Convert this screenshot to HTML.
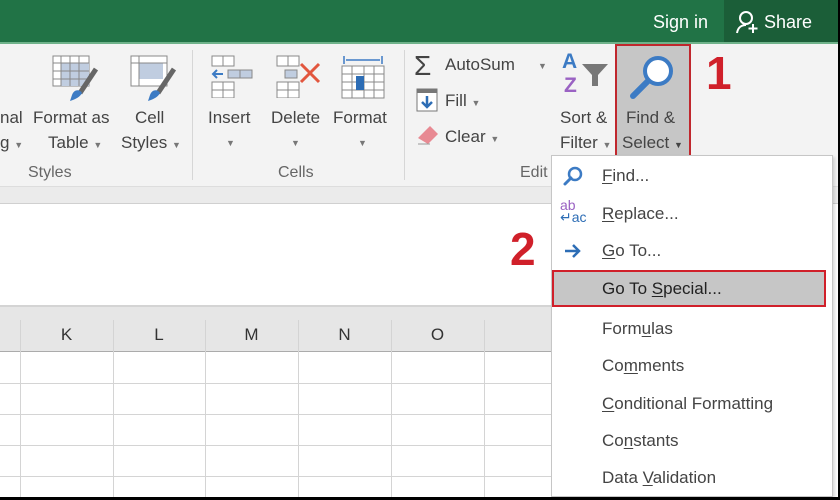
<!DOCTYPE html>
<html><head><meta charset="utf-8"><style>
*{margin:0;padding:0;box-sizing:border-box}
body{width:840px;height:500px;overflow:hidden;background:#000;font-family:"Liberation Sans","DejaVu Sans",sans-serif;position:relative}
.a{position:absolute}
.t{position:absolute;color:#444;font-size:17px;white-space:nowrap}
.c{text-align:center}
.g{color:#666;font-size:16px}
.ar{font-size:9px;color:#777}
.mi{position:absolute;left:602px;font-size:17px;color:#444;white-space:nowrap}
u{text-decoration:underline;text-underline-offset:2px}
</style></head><body>
<!-- main canvas inside black frame -->
<div class="a" style="left:0;top:0;width:838px;height:497px;background:#fff"></div>
<div class="a" style="left:0;top:0;width:838px;height:42px;background:#217346"></div>
<div class="a" style="left:0;top:42px;width:838px;height:2px;background:#6fb28a"></div>
<div class="a" style="left:724px;top:0;width:114px;height:42px;background:#1b5e38"></div>
<div class="t" style="left:653px;top:12px;color:#fff;font-size:18px">Sign in</div>
<svg class="a" style="left:735px;top:10px" width="26" height="24" viewBox="0 0 26 24"><circle cx="11" cy="8" r="6" fill="none" stroke="#fff" stroke-width="2"/><path d="M2 23c1-6 5-8 9-8" fill="none" stroke="#fff" stroke-width="2"/><path d="M18 14v9M13.5 18.5h9" stroke="#fff" stroke-width="2"/></svg>
<div class="t" style="left:764px;top:12px;color:#fff;font-size:18px">Share</div>
<!-- ribbon -->
<div class="a" style="left:0;top:44px;width:838px;height:142px;background:#f3f3f3"></div>
<div class="a" style="left:0;top:186px;width:838px;height:18px;background:#ebebeb;border-top:1px solid #ddd;border-bottom:1px solid #d0d0d0"></div>
<div class="a" style="left:192px;top:50px;width:1px;height:130px;background:#d6d6d6"></div>
<div class="a" style="left:404px;top:50px;width:1px;height:130px;background:#d6d6d6"></div>
<!-- format as table icon -->
<svg class="a" style="left:52px;top:55px" width="46" height="48" viewBox="0 0 46 48"><rect x="1" y="1" width="36" height="30" fill="#fff" stroke="#888"/><rect x="9" y="8" width="28" height="23" fill="#c0cde0"/><path d="M1 8h36M1 16h36M1 24h36M9 1v30M18 1v30M27 1v30" stroke="#888" fill="none"/><path d="M44 14l-16 24" stroke="#666" stroke-width="5"/><path d="M20 40c2-6 8-6 10-2-2 4-6 6-12 8z" fill="#3c7bc4"/></svg>
<svg class="a" style="left:130px;top:55px" width="46" height="48" viewBox="0 0 46 48"><rect x="1" y="1" width="36" height="30" fill="#fff" stroke="#888"/><rect x="9" y="8" width="24" height="16" fill="#c0cde0"/><path d="M1 8h36M9 1v30" stroke="#888"/><path d="M44 14l-16 24" stroke="#666" stroke-width="5"/><path d="M20 40c2-6 8-6 10-2-2 4-6 6-12 8z" fill="#3c7bc4"/></svg>
<div class="t" style="left:0;top:108px">nal</div>
<div class="t" style="left:33px;top:108px">Format as</div>
<div class="t" style="left:135px;top:108px">Cell</div>
<div class="t" style="left:0;top:133px">g <span class="ar">▼</span></div>
<div class="t" style="left:48px;top:133px">Table <span class="ar">▼</span></div>
<div class="t" style="left:121px;top:133px">Styles <span class="ar">▼</span></div>
<div class="t g" style="left:28px;top:164px">Styles</div>
<!-- cells icons -->
<svg class="a" style="left:210px;top:54px" width="44" height="44" viewBox="0 0 44 44"><path d="M2 2h22v10H2zM13 2v10M2 28h22v16H2zM2 36h22M13 28v16" fill="#fff" stroke="#888"/><rect x="18" y="16" width="24" height="8" fill="#c0cde0" stroke="#888"/><path d="M30 16v8" stroke="#888"/><path d="M3 20h10M7 16l-4 4 4 4" stroke="#3c7bc4" stroke-width="2" fill="none"/></svg>
<svg class="a" style="left:275px;top:54px" width="48" height="44" viewBox="0 0 48 44"><path d="M2 2h22v10H2zM13 2v10M2 28h22v16H2zM2 36h22M13 28v16" fill="#fff" stroke="#888"/><rect x="10" y="16" width="12" height="8" fill="#c0cde0" stroke="#888"/><path d="M26 10l18 18M44 10L26 28" stroke="#e2563e" stroke-width="3"/></svg>
<svg class="a" style="left:340px;top:52px" width="46" height="50" viewBox="0 0 46 50"><path d="M4 4v8M42 4v8M6 8h34" stroke="#3c7bc4" stroke-width="1.5"/><rect x="2" y="14" width="42" height="32" fill="#fff" stroke="#888"/><path d="M2 22h42M2 30h42M2 38h42M12 14v32M24 14v32M34 14v32" stroke="#888"/><rect x="16" y="24" width="8" height="14" fill="#2d6db5"/></svg>
<div class="t" style="left:208px;top:108px">Insert</div>
<div class="t" style="left:271px;top:108px">Delete</div>
<div class="t" style="left:333px;top:108px">Format</div>
<div class="t ar" style="left:226px;top:138px">▼</div>
<div class="t ar" style="left:291px;top:138px">▼</div>
<div class="t ar" style="left:358px;top:138px">▼</div>
<div class="t g" style="left:278px;top:164px">Cells</div>
<!-- editing -->
<div class="t" style="left:414px;top:50px;font-size:28px;color:#444">Σ</div>
<div class="t" style="left:445px;top:55px">AutoSum</div>
<div class="t ar" style="left:538px;top:61px">▼</div>
<svg class="a" style="left:416px;top:88px" width="22" height="24" viewBox="0 0 22 24"><rect x="1" y="1" width="20" height="22" fill="#fff" stroke="#777"/><rect x="1" y="1" width="20" height="4" fill="#777"/><path d="M11 8v11M6 14l5 5 5-5" stroke="#2d6db5" stroke-width="2.5" fill="none"/></svg>
<div class="t" style="left:445px;top:91px">Fill <span class="ar">▼</span></div>
<svg class="a" style="left:416px;top:124px" width="24" height="22" viewBox="0 0 24 22"><path d="M2 14L14 2l8 8-10 10z" fill="#e88a93"/><path d="M2 20h12" stroke="#999"/></svg>
<div class="t" style="left:445px;top:127px">Clear <span class="ar">▼</span></div>
<div class="t g" style="left:520px;top:164px">Edit</div>
<div class="t" style="left:562px;top:50px;font-size:21px;color:#3c7bc4;font-weight:bold">A</div>
<div class="t" style="left:564px;top:74px;font-size:21px;color:#9a62c3;font-weight:bold">Z</div>
<svg class="a" style="left:580px;top:62px" width="30" height="26" viewBox="0 0 30 26"><path d="M2 2h26L18 13v11h-6V13z" fill="#777"/></svg>
<div class="t" style="left:560px;top:108px">Sort &amp;</div>
<div class="t" style="left:560px;top:133px">Filter <span class="ar">▼</span></div>
<!-- find & select -->
<div class="a" style="left:615px;top:44px;width:76px;height:117px;background:#c6c6c6;border:2px solid #c0272d"></div>
<svg class="a" style="left:628px;top:52px" width="50" height="50" viewBox="0 0 50 50"><circle cx="30" cy="19" r="13" fill="#fff" stroke="#3c7bc4" stroke-width="4"/><path d="M20 29L5 44" stroke="#3c7bc4" stroke-width="6" stroke-linecap="round"/></svg>
<div class="t" style="left:626px;top:108px">Find &amp;</div>
<div class="t" style="left:622px;top:133px">Select <span class="ar" style="color:#444">▼</span></div>
<div class="t" style="left:706px;top:46px;font-size:46px;font-weight:bold;color:#d0202a">1</div>
<!-- grid -->
<div class="a" style="left:0;top:305px;width:552px;height:2px;background:#d4d4d4"></div>
<div class="a" style="left:0;top:307px;width:552px;height:45px;background:#e6e6e6;border-bottom:1px solid #ababab"></div>
<div class="t c" style="left:20px;width:93px;top:325px;color:#333;font-size:17px">K</div>
<div class="t c" style="left:113px;width:92px;top:325px;color:#333;font-size:17px">L</div>
<div class="t c" style="left:205px;width:93px;top:325px;color:#333;font-size:17px">M</div>
<div class="t c" style="left:298px;width:93px;top:325px;color:#333;font-size:17px">N</div>
<div class="t c" style="left:391px;width:93px;top:325px;color:#333;font-size:17px">O</div>
<svg class="a" style="left:0;top:320px" width="552" height="177"><g stroke="#d4d4d4" stroke-width="1"><path d="M20.5 0v177M113.5 0v177M205.5 0v177M298.5 0v177M391.5 0v177M484.5 0v177"/><path d="M0 63.5h552M0 94.5h552M0 125.5h552M0 156.5h552"/></g></svg>
<div class="t" style="left:510px;top:222px;font-size:46px;font-weight:bold;color:#d0202a">2</div>
<!-- dropdown -->
<div class="a" style="left:551px;top:155px;width:282px;height:342px;background:#fff;border:1px solid #c6c6c6;box-shadow:2px 2px 3px rgba(0,0,0,.15)"></div>
<div class="a" style="left:552px;top:270px;width:274px;height:37px;background:#c6c6c6;border:2px solid #d0202a"></div>
<svg class="a" style="left:562px;top:165px" width="22" height="22" viewBox="0 0 22 22"><circle cx="13" cy="9" r="6" fill="none" stroke="#3c7bc4" stroke-width="2.5"/><path d="M9 13l-6 6" stroke="#3c7bc4" stroke-width="3" stroke-linecap="round"/></svg>
<div class="t" style="left:560px;top:199px;font-size:14px;line-height:12px;color:#9a62c3">ab<br><span style="color:#2d6db5">↵ac</span></div>
<svg class="a" style="left:563px;top:243px" width="20" height="16" viewBox="0 0 20 16"><path d="M2 8h14M10 2l6 6-6 6" stroke="#2d6db5" stroke-width="2.5" fill="none"/></svg>
<div class="mi" style="top:166px"><u>F</u>ind...</div>
<div class="mi" style="top:204px"><u>R</u>eplace...</div>
<div class="mi" style="top:241px"><u>G</u>o To...</div>
<div class="mi" style="top:279px;color:#222">Go To <u>S</u>pecial...</div>
<div class="mi" style="top:319px">Form<u>u</u>las</div>
<div class="mi" style="top:356px">Co<u>m</u>ments</div>
<div class="mi" style="top:394px"><u>C</u>onditional Formatting</div>
<div class="mi" style="top:431px">Co<u>n</u>stants</div>
<div class="mi" style="top:468px">Data <u>V</u>alidation</div>
</body></html>
